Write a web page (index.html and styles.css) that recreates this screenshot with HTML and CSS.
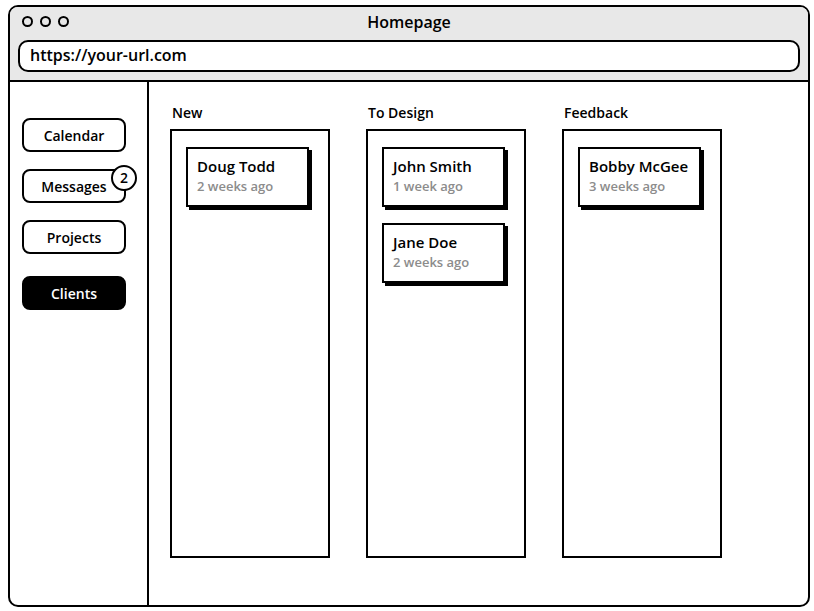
FILE: index.html
```html
<!DOCTYPE html>
<html lang="en">
<head>
  <meta charset="UTF-8">
  <title>Homepage</title>
  <meta name="viewport" content="width=device-width, initial-scale=1.0">
  <link rel="stylesheet" href="styles.css">
</head>
<body>

  <div class="window">
    <div class="titlebar">
      <div class="titleRow">
        <div class="dots">
          <span class="dot"></span>
          <span class="dot"></span>
          <span class="dot"></span>
        </div>
        <div class="title">Homepage</div>
      </div>
      <div class="urlBar">https://your-url.com</div>
    </div>

    <div class="main">
      <div class="sidebar">
        <button class="navBtn">Calendar</button>
        <button class="navBtn">Messages<span class="badge">2</span></button>
        <button class="navBtn">Projects</button>
        <button class="navBtn active">Clients</button>
      </div>

      <div class="board">
        <div class="column">
          <div class="colTitle">New</div>
          <div class="colBox">
            <div class="card">
              <div class="cardName">Doug Todd</div>
              <div class="cardTime">2 weeks ago</div>
            </div>
          </div>
        </div>

        <div class="column">
          <div class="colTitle">To Design</div>
          <div class="colBox">
            <div class="card">
              <div class="cardName">John Smith</div>
              <div class="cardTime">1 week ago</div>
            </div>
            <div class="card">
              <div class="cardName">Jane Doe</div>
              <div class="cardTime">2 weeks ago</div>
            </div>
          </div>
        </div>

        <div class="column">
          <div class="colTitle">Feedback</div>
          <div class="colBox">
            <div class="card">
              <div class="cardName">Bobby McGee</div>
              <div class="cardTime">3 weeks ago</div>
            </div>
          </div>
        </div>
      </div>
    </div>
  </div>

</body>
</html>
```

FILE: styles.css
```css
* {
  box-sizing: border-box;
  margin: 0;
  padding: 0;
}

body {
  background: #fff;
  color: #000;
  font-family: "Open Sans", sans-serif;
  font-weight: 600;
}

.window {
  margin: 5px 0 0 8px;
  width: 802px;
  height: 602px;
  border: 2px solid #000;
  border-radius: 10px;
  overflow: hidden;
  display: flex;
  flex-direction: column;
}

.titlebar {
  background: #e8e8e8;
  height: 75px;
  border-bottom: 2px solid #000;
  padding: 0 8px;
}

.titleRow {
  position: relative;
  height: 29px;
  display: flex;
  align-items: center;
}

.dots {
  display: flex;
  gap: 7px;
  padding-left: 4px;
}

.dot {
  width: 11px;
  height: 11px;
  border: 2px solid #000;
  border-radius: 50%;
}

.title {
  position: absolute;
  left: 0;
  right: 0;
  text-align: center;
  font-size: 16px;
}

.urlBar {
  margin-top: 4px;
  height: 32px;
  background: #fff;
  border: 2px solid #000;
  border-radius: 10px;
  padding-left: 10px;
  font-size: 16px;
  line-height: 26px;
}

.main {
  flex: 1;
  display: flex;
}

.sidebar {
  width: 139px;
  border-right: 2px solid #000;
  padding: 36px 0 0 12px;
  display: flex;
  flex-direction: column;
  gap: 17px;
}

.navBtn {
  position: relative;
  width: 104px;
  height: 34px;
  background: #fff;
  border: 2px solid #000;
  border-radius: 8px;
  font-family: "Open Sans", sans-serif;
  font-weight: 600;
  font-size: 14px;
  color: #000;
}

.navBtn.active {
  background: #000;
  color: #fff;
  margin-top: 5px;
}

.badge {
  position: absolute;
  right: -13px;
  top: -6px;
  width: 26px;
  height: 26px;
  border: 2px solid #000;
  border-radius: 50%;
  background: #fff;
  font-size: 14px;
  line-height: 22px;
  text-align: center;
}

.board {
  flex: 1;
  display: flex;
  gap: 36px;
  padding: 21px 0 0 21px;
}

.column {
  width: 160px;
  display: flex;
  flex-direction: column;
}

.colTitle {
  font-size: 14px;
  line-height: 20px;
  padding-left: 2px;
  margin-bottom: 6px;
}

.colBox {
  height: 429px;
  border: 2px solid #000;
  padding: 16px 0 0 14px;
  display: flex;
  flex-direction: column;
  gap: 16px;
}

.card {
  width: 123px;
  height: 60px;
  border: 2px solid #000;
  box-shadow: 3px 3px 0 #000;
  padding: 6px 0 0 9px;
}

.cardName {
  font-size: 15px;
  line-height: 22px;
}

.cardTime {
  font-size: 13px;
  line-height: 18px;
  color: #8c8c8c;
}
```
